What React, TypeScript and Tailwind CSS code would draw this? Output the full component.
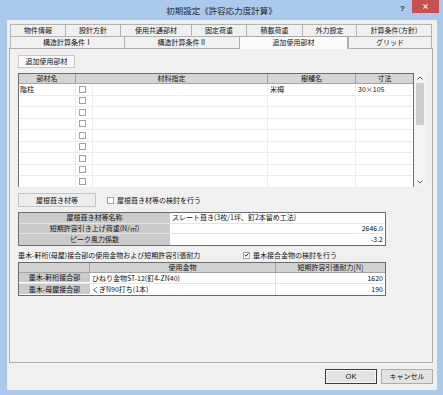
import type { ReactNode } from "react"

/**
 * 初期設定《許容応力度計算》ダイアログ
 * - 追加使用部材タブを表示した状態
 */

type Tab = { label: string; w: string; active?: boolean }

const tabsRow1: Tab[] = [
  { label: "物件情報", w: "w-[55px]" },
  { label: "設計方針", w: "w-[55px]" },
  { label: "使用共通部材", w: "w-[71px]" },
  { label: "固定荷重", w: "w-[55px]" },
  { label: "積載荷重", w: "w-[56px]" },
  { label: "外力設定", w: "w-[54px]" },
  { label: "計算条件(方針)", w: "w-[76px]" },
]

const tabsRow2: Tab[] = [
  { label: "構造計算条件Ⅰ", w: "w-[114px]" },
  { label: "構造計算条件Ⅱ", w: "w-[115px]" },
  { label: "追加使用部材", w: "w-[109px]", active: true },
  { label: "グリッド", w: "w-[84px]" },
]

// 追加使用部材の行（1行目のみ入力済み）
const memberRows = [
  { name: "階柱", species: "米栂", size: "30×105" },
  ...Array.from({ length: 8 }, () => ({ name: "", species: "", size: "" })),
]

const roofRows = [
  { label: "屋根葺き材等名称", value: "スレート葺き(3枚/1坪、釘2本留め工法)", right: false },
  { label: "短期許容引き上げ荷重(N/㎡)", value: "2646.0", right: true },
  { label: "ピーク風力係数", value: "-3.2", right: true },
]

const jointRows = [
  { label: "垂木-軒桁接合部", hardware: "ひねり金物ST-12(釘4-ZN40)", force: "1620" },
  { label: "垂木-母屋接合部", hardware: "くぎN90打ち(1本)", force: "190" },
]

function Check({ checked = false }: { checked?: boolean }) {
  return (
    <span className="flex h-[7px] w-[7px] shrink-0 items-center justify-center border border-[#a2a2a2] bg-white">
      {checked && (
        <svg viewBox="0 0 7 7" className="h-[6px] w-[6px]">
          <path d="M1 3.4 L2.8 5.2 L6 1.4" fill="none" stroke="#1e1e1e" strokeWidth="1.4" />
        </svg>
      )}
    </span>
  )
}

function Chevron({ up }: { up?: boolean }) {
  return (
    <svg viewBox="0 0 6 4" className="h-[4px] w-[6px]">
      <path d={up ? "M0.5 3.5 L3 1 L5.5 3.5" : "M0.5 0.5 L3 3 L5.5 0.5"} fill="none" stroke="#606060" strokeWidth="1" />
    </svg>
  )
}

function TabRow({ tabs }: { tabs: Tab[] }) {
  return (
    <div className="ml-[3px] flex h-[12px] w-[422px] items-start">
      {tabs.map((t, i) => (
        <div
          key={t.label}
          className={
            t.active
              ? `${t.w} relative z-10 flex h-[13px] items-center justify-center border-x border-t border-[#adadad] bg-[#fbfbfb] pb-[1px]`
              : `${t.w} flex h-[12px] items-center justify-center border-t border-l border-[#b4b4b4] ${i === tabs.length - 1 ? "border-r" : ""}`
          }
        >
          {t.label}
        </div>
      ))}
    </div>
  )
}

function Cell({ children, className = "" }: { children?: ReactNode; className?: string }) {
  return <div className={`flex items-center overflow-hidden whitespace-nowrap ${className}`}>{children}</div>
}

export default function App() {
  return (
    <div className="flex h-[395px] w-[443px] flex-col overflow-hidden bg-[#abc9ec] font-['Noto_Sans_CJK_JP',sans-serif] text-[7px] leading-none text-[#111]">
      {/* タイトルバー */}
      <div className="grid h-[20px] grid-cols-[1fr_auto_1fr] items-start">
        <div />
        <div className="pt-[6px] text-[8.5px] text-[#262626]">初期設定《許容応力度計算》</div>
        <div className="flex items-start justify-end pr-[4px]">
          <span className="mr-[7px] mt-[5px] font-['Liberation_Sans',sans-serif] text-[8px] font-bold text-[#333]">?</span>
          <div className="flex h-[13px] w-[27px] items-center justify-center bg-[#c75050]">
            <svg viewBox="0 0 6 6" className="h-[5px] w-[5px]">
              <path d="M0.5 0.5 L5.5 5.5 M5.5 0.5 L0.5 5.5" stroke="#fff" strokeWidth="1.4" />
            </svg>
          </div>
        </div>
      </div>

      {/* 本体 */}
      <div className="ml-[7px] mr-[6px] flex h-[370px] flex-col bg-[#f0f0f0] pt-[4px]">
        <TabRow tabs={tabsRow1} />
        <TabRow tabs={tabsRow2} />

        <div className="ml-[2px] flex h-[315px] w-[424px] flex-col border border-[#adadad] bg-[#f0f0f0] pl-[8px] pt-[6px]">
          {/* サブタブ */}
          <div className="flex h-[13px] w-[57px] items-center justify-center border border-[#c8c8c8] bg-[#f8f8f8]">
            追加使用部材
          </div>

          {/* 追加使用部材テーブル */}
          <div className="mt-[5px] flex h-[114px]">
            <div className="flex w-[396px] flex-col border-x border-t border-[#6c6c6c] bg-white">
              <div className="grid h-[10px] shrink-0 grid-cols-[57px_192px_88px_57px] bg-[#d5d5d5]">
                <Cell className="justify-center border-b border-r border-[#a3a3a3]">部材名</Cell>
                <Cell className="justify-center border-b border-r border-[#a3a3a3]">材料指定</Cell>
                <Cell className="justify-center border-b border-r border-[#a3a3a3]">樹種名</Cell>
                <Cell className="justify-center border-b border-[#a3a3a3]">寸法</Cell>
              </div>
              {memberRows.map((r, i) => (
                <div key={i} className="grid h-[11.5px] shrink-0 grid-cols-[57px_17px_175px_88px_57px] border-b border-[#ededed]">
                  <Cell className="border-r border-[#ededed] pl-[1px]">{r.name}</Cell>
                  <Cell className="border-r border-[#ededed] pl-[3px]">
                    <Check />
                  </Cell>
                  <Cell className="border-r border-[#ededed]" />
                  <Cell className="border-r border-[#ededed] pl-[2px]">{r.species}</Cell>
                  <Cell className="pl-[2px]">{r.size}</Cell>
                </div>
              ))}
            </div>
            {/* スクロールバー */}
            <div className="flex w-[12px] flex-col bg-[#f4f4f4]">
              <div className="flex h-[10px] items-center justify-center">
                <Chevron up />
              </div>
              <div className="flex-1 pl-[2px]">
                <div className="h-[42px] w-[8px] bg-[#cdcdcd]" />
              </div>
              <div className="flex h-[10px] items-center justify-center">
                <Chevron />
              </div>
            </div>
          </div>

          {/* 屋根葺き材等 */}
          <div className="mt-[6px] flex h-[14px] items-center">
            <div className="flex h-[14px] w-[78px] items-center justify-center border border-[#c2c2c2] bg-[#ededed]">
              屋根葺き材等
            </div>
            <span className="ml-[11px]">
              <Check />
            </span>
            <span className="ml-[3px]">屋根葺き材等の検討を行う</span>
          </div>

          <div className="mt-[5px] flex w-[368px] flex-col border border-[#6c6c6c] bg-white">
            {roofRows.map((r, i) => (
              <div
                key={r.label}
                className={`grid h-[10.7px] grid-cols-[151px_1fr] ${i < roofRows.length - 1 ? "border-b border-[#e4e4e4]" : ""}`}
              >
                <Cell className="justify-center bg-[#cbcbcb]">{r.label}</Cell>
                <Cell className={r.right ? "justify-end pr-[2px]" : "pl-[2px]"}>{r.value}</Cell>
              </div>
            ))}
          </div>

          {/* 垂木接合部 */}
          <div className="mt-[4px] flex h-[10px] items-center">
            <span className="w-[225px] whitespace-nowrap">垂木-軒桁(母屋)接合部の使用金物および短期許容引張耐力</span>
            <Check checked />
            <span className="ml-[3px]">垂木接合金物の検討を行う</span>
          </div>

          <div className="mt-[2px] flex w-[368px] flex-col border border-[#6c6c6c] bg-white">
            <div className="grid h-[10px] grid-cols-[71px_186px_109px] border-b border-[#a3a3a3] bg-[#d2d2d2]">
              <Cell className="border-r border-[#a3a3a3]" />
              <Cell className="justify-center border-r border-[#a3a3a3]">使用金物</Cell>
              <Cell className="justify-center">短期許容引張耐力[N]</Cell>
            </div>
            {jointRows.map((r, i) => (
              <div
                key={r.label}
                className={`grid h-[11px] grid-cols-[71px_186px_109px] ${i < jointRows.length - 1 ? "border-b border-[#e4e4e4]" : ""}`}
              >
                <Cell className="justify-center border-b border-white bg-[#cbcbcb]">{r.label}</Cell>
                <Cell className="border-r border-[#e4e4e4] pl-[2px]">{r.hardware}</Cell>
                <Cell className="justify-end pr-[2px]">{r.force}</Cell>
              </div>
            ))}
          </div>
        </div>

        {/* ボタン */}
        <div className="mt-[6px] flex justify-end gap-[4px] pr-[4px]">
          <button
            type="button"
            className="flex h-[15px] w-[52px] items-center justify-center border border-[#3c3c3c] bg-[#e3e3e3] font-['Liberation_Sans',sans-serif] text-[7.5px] shadow-[inset_0_0_0_1px_#f6f6f6]"
          >
            OK
          </button>
          <button
            type="button"
            className="flex h-[15px] w-[52px] items-center justify-center border border-[#adadad] bg-[#e3e3e3] text-[7px]"
          >
            キャンセル
          </button>
        </div>
      </div>
    </div>
  )
}
